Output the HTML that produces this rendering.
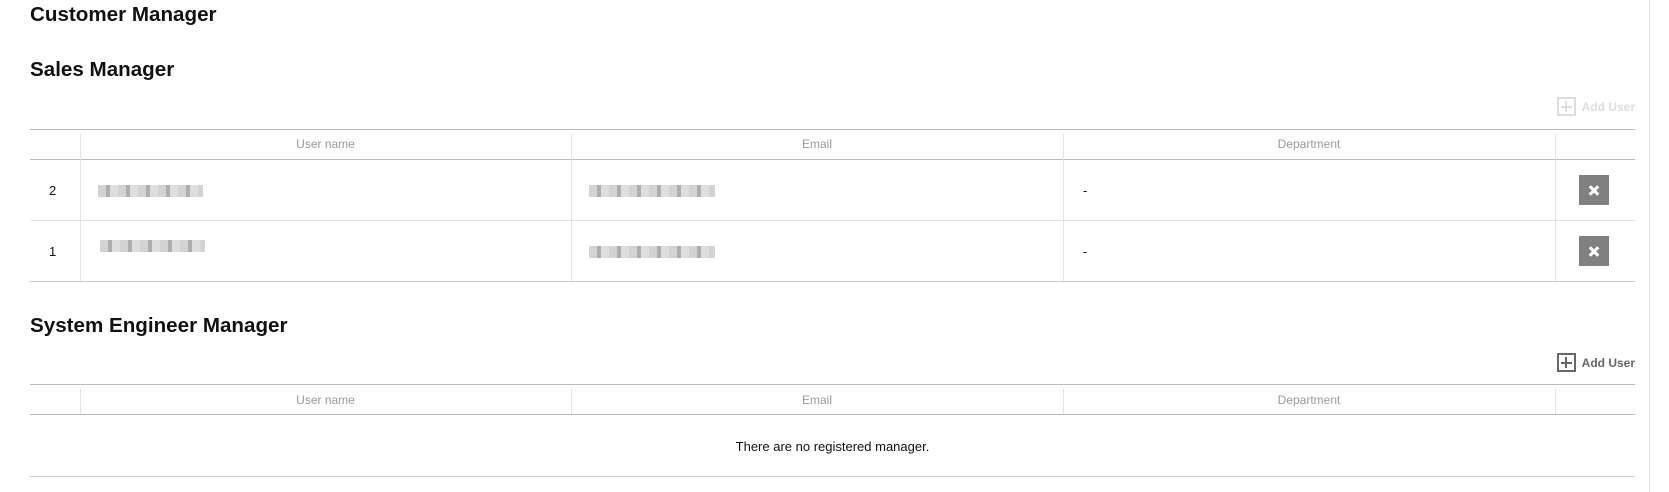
<!DOCTYPE html>
<html><head><style>
body{margin:0;width:1669px;height:492px;background:#fff;font-family:"Liberation Sans",sans-serif;position:relative;overflow:hidden;color:#111}
.a{position:absolute}
h2{position:absolute;margin:0;font-size:20.6px;font-weight:bold;left:30px}
.hl{position:absolute;left:30px;width:1605px;height:1px;background:#bbb}
.rl{position:absolute;left:30px;width:1605px;height:1px;background:#e4e4e4}
.vl{position:absolute;width:1px;background:#e4e4e4}
.th{position:absolute;font-size:12px;color:#999;text-align:center}
.td{position:absolute;font-size:13px}
.x{position:absolute;left:1579px;width:30px;height:30px;background:#808080}
.x:before,.x:after{content:"";position:absolute;left:9px;top:13.5px;width:12px;height:3px;background:#fff;transform:rotate(45deg)}
.x:after{transform:rotate(-45deg)}
.add{position:absolute;right:34px;font-size:12px;display:flex;align-items:center;gap:6px;font-weight:bold}
.add span.b{display:inline-block;width:19px;height:19px;border:2px solid;box-sizing:border-box;position:relative}
.add span.b:before{content:"";position:absolute;left:2px;right:2px;top:6.5px;height:2px;background:currentColor}
.add span.b:after{content:"";position:absolute;top:2px;bottom:2px;left:6.5px;width:2px;background:currentColor}
.blur{position:absolute;height:12px;background:repeating-linear-gradient(90deg,#c8c8c8 0 8px,#9a9a9a 8px 12px,#d6d6d6 12px 20px);opacity:.8}
</style></head><body>
<h2 style="top:3px">Customer Manager</h2>
<h2 style="top:58px">Sales Manager</h2>
<div class="add" style="top:97px;color:#ddd"><span class="b"></span>Add User</div>
<div class="hl" style="top:129px"></div>
<div class="hl" style="top:159px"></div>
<div class="rl" style="top:220px"></div>
<div class="hl" style="top:281px;background:#ccc"></div>
<div class="vl" style="left:80px;top:134px;height:147px"></div>
<div class="vl" style="left:571px;top:134px;height:147px"></div>
<div class="vl" style="left:1063px;top:134px;height:147px"></div>
<div class="vl" style="left:1555px;top:134px;height:147px"></div>
<div class="th" style="left:80px;width:491px;top:137px">User name</div>
<div class="th" style="left:571px;width:492px;top:137px">Email</div>
<div class="th" style="left:1063px;width:492px;top:137px">Department</div>
<div class="td" style="left:49px;top:183px">2</div>
<div class="td" style="left:49px;top:244px">1</div>
<div class="blur" style="left:98px;top:185px;width:105px"></div>
<div class="blur" style="left:100px;top:240px;width:105px"></div>
<div class="blur" style="left:589px;top:185px;width:126px"></div>
<div class="blur" style="left:589px;top:246px;width:126px"></div>
<div class="td" style="left:1083px;top:183px">-</div>
<div class="td" style="left:1083px;top:244px">-</div>
<div class="x" style="top:175px"></div>
<div class="x" style="top:236px"></div>
<h2 style="top:314px">System Engineer Manager</h2>
<div class="add" style="top:353px;color:#666"><span class="b"></span>Add User</div>
<div class="hl" style="top:384px"></div>
<div class="hl" style="top:414px"></div>
<div class="hl" style="top:476px;background:#ccc"></div>
<div class="vl" style="left:80px;top:389px;height:25px"></div>
<div class="vl" style="left:571px;top:389px;height:25px"></div>
<div class="vl" style="left:1063px;top:389px;height:25px"></div>
<div class="vl" style="left:1555px;top:389px;height:25px"></div>
<div class="th" style="left:80px;width:491px;top:393px">User name</div>
<div class="th" style="left:571px;width:492px;top:393px">Email</div>
<div class="th" style="left:1063px;width:492px;top:393px">Department</div>
<div class="td" style="left:30px;width:1605px;text-align:center;top:439px">There are no registered manager.</div>
<div class="a" style="left:1649px;top:0;width:1px;height:492px;background:#e0e0e0"></div>
</body></html>
